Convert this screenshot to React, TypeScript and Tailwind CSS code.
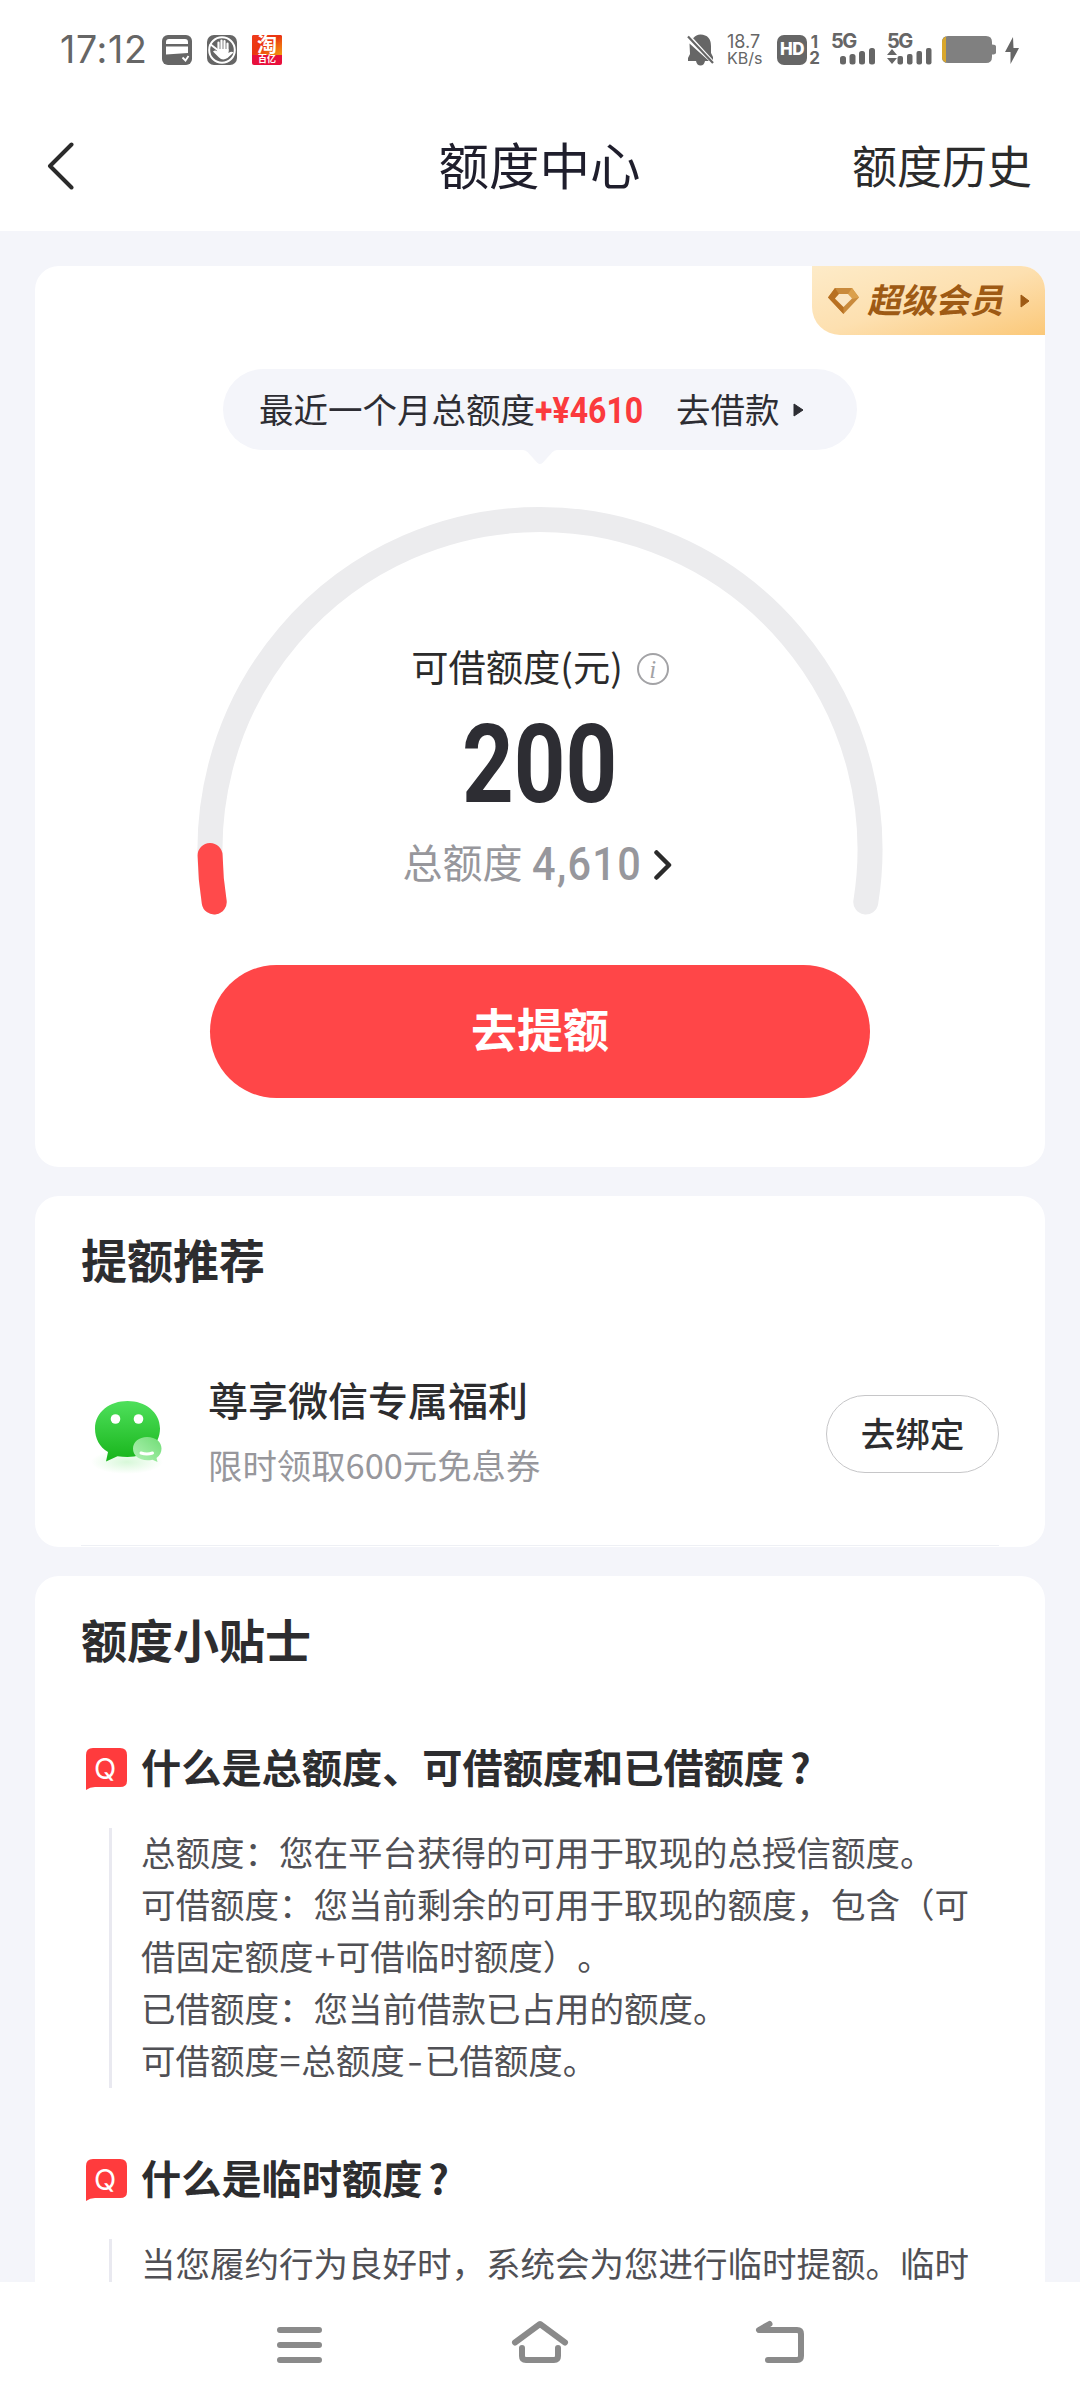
import React from 'react'

const tips = [
  {
    question: '什么是总额度、可借额度和已借额度',
    lines: [
      '总额度：您在平台获得的可用于取现的总授信额度。',
      '可借额度：您当前剩余的可用于取现的额度，包含（可',
      '借固定额度+可借临时额度）。',
      '已借额度：您当前借款已占用的额度。',
      '可借额度=总额度-已借额度。',
    ],
  },
  {
    question: '什么是临时额度',
    lines: ['当您履约行为良好时，系统会为您进行临时提额。临时'],
  },
]

// operators get a bit more room than the surrounding characters
const Line = ({ text }: { text: string }) => {
  return (
    <p>
      {text.split(/([+=-])/).map((part, i) => {
        if (part === '-') return <span key={i} className="inline-block scale-x-[1.300] px-[4px]">-</span>
        if (part === '+' || part === '=') return <span key={i} className="inline-block scale-x-110 px-[1.500px]">{part}</span>
        return part
      })}
    </p>
  )
}

const Signal = ({ data = false }: { data?: boolean }) => {
  return (
    <div className="relative h-[32px] w-[45px] shrink-0">
      <span className="absolute -top-[2px] left-0 font-[Inter] text-[20px] leading-[18px] font-bold tracking-[-1.500px]">5G</span>
      <svg className="absolute inset-0" width="45" height="32" viewBox="0 0 45 32" fill="#666">
        {data ? (
          <>
            <path d="M5 15l5 6H0zM5 30l-5-6h10z" />
            <rect x="10.500" y="22" width="5.500" height="8.500" rx="2" />
            <rect x="20" y="20" width="5.500" height="10.500" rx="2" />
            <rect x="29.500" y="17" width="5.500" height="13.500" rx="2" />
            <rect x="39" y="14" width="5.500" height="16.500" rx="2" />
          </>
        ) : (
          <>
            <rect x="9" y="22" width="6" height="8.500" rx="2.500" />
            <rect x="18.500" y="20" width="6" height="10.500" rx="2.500" />
            <rect x="28" y="17" width="6" height="13.500" rx="2.500" />
            <rect x="38" y="14" width="6" height="16.500" rx="2.500" />
          </>
        )}
      </svg>
    </div>
  )
}

const StatusBar = () => {
  return (
    <div className="flex h-[100px] shrink-0 items-center pr-[61px] pl-[60px] text-[#666]">
      <span className="w-[102px] font-[Inter] text-[37.500px] leading-none tracking-[0.700px] whitespace-nowrap">17:12</span>
      <svg width="30" height="30" viewBox="0 0 30 30">
        <rect width="30" height="30" rx="6" fill="#666" />
        <path d="M4 9V7q0-3 3-3h16q3 0 3 3v2zM4 11.500h22V18L4 19.500z" fill="#fff" />
        <path d="M20.500 22.500l3 3 3-4.500" fill="none" stroke="#fff" strokeWidth="1.800" />
      </svg>
      <svg className="ml-[15px]" width="30" height="30" viewBox="0 0 30 30">
        <rect width="30" height="30" rx="7" fill="#666" />
        <circle cx="15" cy="15" r="12.800" fill="none" stroke="#fff" strokeWidth="2" />
        <path d="M3 9l9 7" stroke="#fff" strokeWidth="2" />
        <path d="M11.500 17V7.500M14.500 15V5.500M17.500 15V6M20.500 16V8.500" stroke="#fff" strokeWidth="2.200" strokeLinecap="round" />
        <path d="M10.500 14h11v4q3-2 5-.5l-6 5.500q-5 3-8.500-.5l-6-6q2-2 4.500 0z" fill="#fff" />
      </svg>
      <div className="ml-[15px] flex h-[30px] w-[30px] flex-col items-center rounded-[2px] bg-[#e8103c]">
        <div className="flex h-[20px] w-full items-center justify-center rounded-t-[2px] bg-linear-to-br from-[#f03c1a] via-[#ea3410] to-[#f09a10] text-[20px] leading-[20px] font-bold text-white">
          <span className="-mt-[2px]">淘</span>
        </div>
        <div className="h-[10px] text-center text-[9px] leading-[8px] font-bold text-white">百亿</div>
      </div>

      <div className="ml-auto flex items-center">
        <svg width="27" height="32" viewBox="0 0 27 32" fill="#666">
          <path d="M6.500 4Q9 .5 13.500.5 24 1 24 12v7l2 4v3L5.500 3.500zM2.500 9.500L22 27h-4q-1 4.500-4.500 4.500T9 27H1v-3l2-4z" />
          <path d="M1 2.500L26 29" stroke="#666" strokeWidth="2.200" />
        </svg>
        <div className="ml-[13px] w-[36px] font-[Inter] text-[18px] leading-[17px] whitespace-nowrap">
          <p>18.7</p>
          <p className="text-[16px]">KB/s</p>
        </div>
        <div className="ml-[14px] flex h-[30px] w-[30px] items-center justify-center rounded-[7px] bg-[#666] font-[Inter] text-[17px] font-extrabold tracking-[-0.500px] text-white">HD</div>
        <div className="ml-[2px] w-[11px] text-center font-[Inter] text-[17px] leading-[16px] font-bold">
          <p>1</p>
          <p>2</p>
        </div>
        <div className="ml-[11px]"><Signal /></div>
        <div className="ml-[11px]"><Signal data /></div>
        <svg className="ml-[10px]" width="54" height="28" viewBox="0 0 54 28">
          <path d="M6 0h38q6 0 6 6v2.500q4 0 4 2v6q0 2-4 2V21q0 6-6 6H6q-6 0-6-6V6q0-6 6-6z" fill="#808080" />
          <path d="M4 .500V26.500Q0 25 0 21V6q0-4 4-5.500z" fill="#d9a72c" />
        </svg>
        <svg className="ml-[9px]" width="14" height="27" viewBox="0 0 14 27">
          <path d="M8 0L0 15h5.500v12L14 11H8.500z" fill="#666" />
        </svg>
      </div>
    </div>
  )
}

const Header = () => {
  return (
    <header className="flex h-[131px] shrink-0 items-center justify-between pr-[48px] pl-[47px]">
      <div className="w-[180px]">
        <svg width="28" height="48" viewBox="0 0 28 48">
          <path d="M24.500 2.500L3 24l21.500 21.500" fill="none" stroke="#2b2b2b" strokeWidth="4" strokeLinecap="round" strokeLinejoin="round" />
        </svg>
      </div>
      <h1 className="pb-[4px] text-[50.500px] leading-none text-[#1f1e2c]">额度中心</h1>
      <span className="pb-[3px] text-[45px] leading-none text-[#2b2b2b]">额度历史</span>
    </header>
  )
}

const QuotaCard = () => {
  return (
    <section className="relative flex h-[901px] flex-col items-center rounded-[24px] bg-white pt-[103px]">
      {/* member badge */}
      <div className="absolute top-0 right-0 flex h-[69px] w-[233px] items-center rounded-tr-[24px] rounded-bl-[28px] bg-linear-to-br from-[#fdebc8] via-[#fde0b0] to-[#fbc878] pl-[16px]">
        <svg width="31" height="26" viewBox="0 0 31 26">
          <path d="M7 0h17l7 9.500L15.500 26 0 9.500z" fill="#c98a3c" />
          <path d="M0 9.500L7 0l4 6-4 5zM15.500 26L0 9.500 7 11l8.500 8z" fill="#b87021" />
          <path d="M24 0l7 9.500-7 1.500-4-5z" fill="#dba04c" />
          <path d="M11 6h9l4 4.500-8.500 8.500L7 10.500z" fill="#fbe6c4" />
        </svg>
        <span className="ml-[11px] -skew-x-12 pb-[3px] text-[34px] leading-none font-bold whitespace-nowrap text-[#9e5a14]">超级会员</span>
        <svg className="ml-[14px]" width="10" height="14" viewBox="0 0 10 14">
          <path d="M1 1l8 6-8 6z" fill="#9e5a14" stroke="#9e5a14" strokeLinejoin="round" />
        </svg>
      </div>

      <div className="flex h-[81px] w-[634px] items-center rounded-full bg-[#f4f5fa] pl-[36px] text-[34.500px] leading-none whitespace-nowrap text-[#2d2d33]">
        <span className="pb-[3px]">最近一个月总额度</span>
        <span className="w-[141px]">
          <span className="inline-block origin-left scale-x-[0.89] font-[Roboto] text-[36px] font-bold text-[#fb3a3d]">+¥4610</span>
        </span>
        <span className="pb-[3px]">去借款</span>
        <svg className="ml-[13px]" width="11" height="14" viewBox="0 0 11 14">
          <path d="M1 1l9 6-9 6z" fill="#2d2d33" stroke="#2d2d33" strokeLinejoin="round" />
        </svg>
      </div>
      <svg width="34" height="14" viewBox="0 0 34 14">
        <path d="M0 0h34q-3 0-5 2.500l-9.500 10.500q-2.500 2-5 0L5 2.500Q3 0 0 0z" fill="#f4f5fa" />
      </svg>

      <div className="relative mt-[43px] flex h-[407px] w-[686px] flex-col items-center pt-[137px]">
        <svg className="absolute inset-0" width="686" height="408" viewBox="0 0 686 408" fill="none" strokeWidth="25" strokeLinecap="round">
          <path d="M17.200 395A330 330 0 1 1 668.800 395" stroke="#ececee" />
          <path d="M17.200 395A330 330 0 0 1 13.100 348.500" stroke="#ff4a4b" />
        </svg>
        <div className="flex h-[50px] items-center text-[37.300px] leading-none text-[#2b2b2b]">
          <span className="pb-[5px]">可借额度(元)</span>
          <span className="ml-[14px] flex h-[32px] w-[32px] items-center justify-center rounded-full border-[2.500px] border-[#a3a3a6] font-['Liberation_Serif'] text-[25px] leading-none text-[#a3a3a6] italic">i</span>
        </div>
        <div className="flex h-[138px] items-center pt-[4px]">
          <span className="scale-x-[0.82] font-[Roboto] text-[110px] leading-none font-bold text-[#2d2d33]">200</span>
        </div>
        <div className="flex h-[62px] items-center pr-[6px] text-[40px] leading-none text-[#97979c]">
          <span className="pb-[4px]">总额度</span>
          <span className="ml-[9px] w-[120px] origin-left scale-x-[0.9] pt-[2px] font-[Roboto] text-[46px] font-medium tracking-[1.500px]">4,610</span>
          <svg className="mt-[3px] ml-[2px]" width="18" height="32" viewBox="0 0 18 32">
            <path d="M2.500 3.500L15 16 2.500 28.500" fill="none" stroke="#2b2b2b" strokeWidth="4.500" strokeLinecap="round" strokeLinejoin="round" />
          </svg>
        </div>
      </div>

      <button className="mt-[51px] h-[133px] w-[660px] rounded-full bg-[#ff4648] pb-[10px] text-[46px] leading-none font-bold text-white">去提额</button>
    </section>
  )
}

const Recommend = () => {
  return (
    <section className="mt-[29px] flex h-[351px] flex-col rounded-[24px] bg-white px-[46px] pt-[37px]">
      <h2 className="text-[46px] leading-[50px] font-bold text-[#2d2d2f]">提额推荐</h2>
      <div className="mt-[45px] flex h-[212px] items-center">
        <svg className="mt-[4px] ml-[4px]" width="90" height="90" viewBox="0 0 90 90">
          <defs>
            <linearGradient id="bubble" x1="0" y1="0" x2="0" y2="1">
              <stop offset="0" stopColor="#4fe05c" />
              <stop offset="1" stopColor="#17b41a" />
            </linearGradient>
            <linearGradient id="small" x1="1" y1="0" x2="0" y2="1">
              <stop offset="0" stopColor="#6fdc74" />
              <stop offset="1" stopColor="#b4f3b8" />
            </linearGradient>
            <radialGradient id="glow">
              <stop offset="0" stopColor="#7be87f" stopOpacity="0.300" />
              <stop offset="1" stopColor="#7be87f" stopOpacity="0" />
            </radialGradient>
          </defs>
          <ellipse cx="42" cy="71" rx="36" ry="12" fill="url(#glow)" />
          <path d="M42.500 10C60 10 75 21 75 37.500S61 66 42.500 66q-5 0-10-.800L21 70.500l2-9.500C14.500 56 10 47.500 10 37.500 10 21 25 10 42.500 10z" fill="url(#bubble)" />
          <circle cx="30.500" cy="28" r="4.800" fill="#fff" />
          <circle cx="53.500" cy="28" r="4.800" fill="#fff" />
          <path d="M62 46c9 0 14.500 5 14.500 11.500 0 4-1.500 7-5 9.500l1 4-5-2.300C56 71 48 65.500 48 57.500 48 51 54 46 62 46z" fill="url(#small)" />
          <path d="M56 62q6 2 11.500 0" fill="none" stroke="#fff" strokeWidth="3" strokeLinecap="round" />
        </svg>
        <div className="ml-[33px] flex flex-col pb-[8px]">
          <p className="text-[40px] leading-[50px] font-medium text-[#2d2d2f]">尊享微信专属福利</p>
          <p className="mt-[18px] text-[34.400px] leading-[44px] text-[#97979c]">限时领取600元免息券</p>
        </div>
        <button className="ml-auto h-[78px] w-[173px] rounded-full border-[1.500px] border-[#c6c6c8] pb-[4px] text-[34.500px] leading-none font-medium text-[#2d2d2f]">去绑定</button>
      </div>
      <div className="mt-[5px] h-px bg-[#eef0f5]" />
    </section>
  )
}

const Tips = () => {
  return (
    <section className="mt-[29px] flex flex-col rounded-t-[24px] bg-white pt-[37px] pl-[46px]">
      <h2 className="text-[46px] leading-[50px] font-bold text-[#2d2d2f]">额度小贴士</h2>
      {tips.map((tip, i) => (
        <div key={i} className={i === 0 ? 'mt-[77px]' : 'mt-[63px]'}>
          <div className="flex h-[58px] items-center">
            <div className="relative ml-[5px] h-[42px] w-[41px]">
              <svg width="41" height="42" viewBox="0 0 41 42">
                <path d="M7 0h27q7 0 7 7v26q0 6-7 6H9q-5 0-9 3V7q0-7 7-7z" fill="#ff3b3d" />
              </svg>
              <span className="absolute inset-0 pt-[6px] pr-[3px] text-center font-[Inter] text-[29px] leading-[30px] text-white">Q</span>
            </div>
            <h3 className="ml-[14px] pb-[6px] text-[40.200px] leading-none font-bold whitespace-nowrap text-[#2d2d2f]">
              {tip.question}<span className="ml-[6px]">?</span>
            </h3>
          </div>
          <div className="mt-[30px] ml-[28px] flex flex-col border-l-[3px] border-[#e9e9f0] pl-[29px] text-[34.500px] leading-[52px] whitespace-nowrap text-[#505055] [text-spacing-trim:space-all]">
            <div className="-mt-[3px] pb-[3px]">
              {tip.lines.map((line) => (
                <Line key={line} text={line} />
              ))}
            </div>
          </div>
        </div>
      ))}
    </section>
  )
}

const NavBar = () => {
  return (
    <nav className="flex h-[126px] shrink-0 items-start justify-between bg-white px-[271px] pt-[35px]">
      <svg width="58" height="50" viewBox="0 0 58 50" stroke="#8a8a8a" strokeWidth="6" strokeLinecap="round">
        <path d="M9 13h39M9 28h39M9 43h39" />
      </svg>
      <svg width="58" height="50" viewBox="0 0 58 50" fill="none" stroke="#8a8a8a" strokeWidth="6" strokeLinecap="round" strokeLinejoin="round">
        <path d="M4 25.500L29 7l25 18.500" />
        <path d="M11 31v8q0 4 4 4h28q4 0 4-4v-8" />
      </svg>
      <svg width="58" height="50" viewBox="0 0 58 50" fill="none" stroke="#8a8a8a" strokeWidth="6" strokeLinecap="round" strokeLinejoin="round">
        <path d="M18.500 7L8 13h38q4 0 4 4v22q0 4-4 4H17" />
      </svg>
    </nav>
  )
}

const App = () => {
  return (
    <div className="flex h-[2408px] w-[1080px] flex-col overflow-hidden bg-white font-['Noto_Sans_CJK_SC',sans-serif]">
      <StatusBar />
      <Header />
      <main className="h-[2051px] shrink-0 overflow-hidden bg-[#f4f5fa] px-[35px] pt-[35px]">
        <QuotaCard />
        <Recommend />
        <Tips />
      </main>
      <NavBar />
    </div>
  )
}

export default App
